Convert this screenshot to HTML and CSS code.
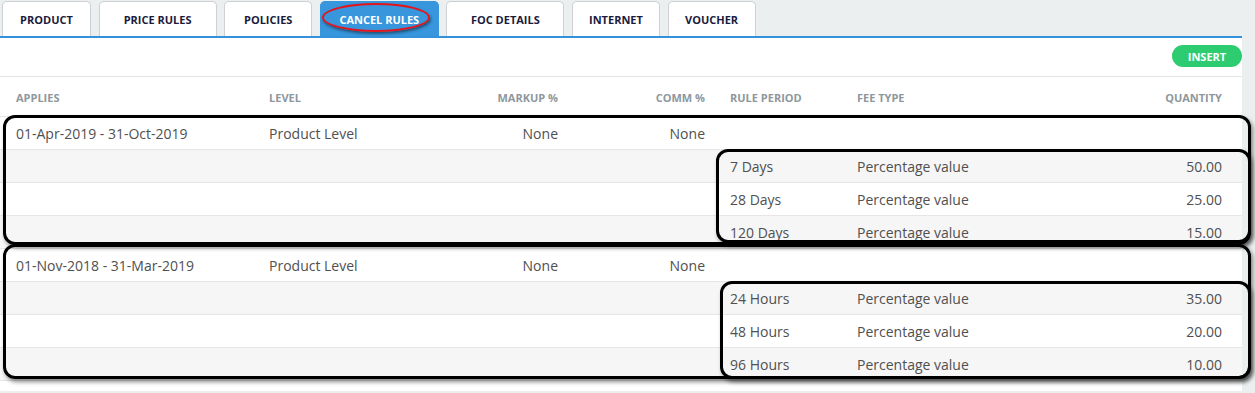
FILE: index.html
```html
<!DOCTYPE html>
<html>
<head>
<meta charset="utf-8">
<link rel="stylesheet" href="styles.css">
</head>
<body>
<div class="page">
  <nav class="tabs">
    <div class="tab t89">PRODUCT</div>
    <div class="tab t118">PRICE RULES</div>
    <div class="tab t88">POLICIES</div>
    <div class="tab t119 active">CANCEL RULES<span class="ring"></span></div>
    <div class="tab t118">FOC DETAILS</div>
    <div class="tab t88">INTERNET</div>
    <div class="tab t88">VOUCHER</div>
  </nav>
  <section class="panel">
    <div class="toolbar"><button class="insert">INSERT</button></div>
    <div class="table">
      <div class="row head">
        <div>APPLIES</div><div>LEVEL</div><div class="r">MARKUP %</div><div class="r">COMM %</div><div class="p">RULE PERIOD</div><div>FEE TYPE</div><div class="r">QUANTITY</div>
      </div>
      <div class="row">
        <div>01-Apr-2019 - 31-Oct-2019</div><div>Product Level</div><div class="r">None</div><div class="r">None</div><div class="p"></div><div></div><div class="r"></div>
      </div>
      <div class="row">
        <div></div><div></div><div class="r"></div><div class="r"></div><div class="p">7 Days</div><div>Percentage value</div><div class="r">50.00</div>
      </div>
      <div class="row">
        <div></div><div></div><div class="r"></div><div class="r"></div><div class="p">28 Days</div><div>Percentage value</div><div class="r">25.00</div>
      </div>
      <div class="row">
        <div></div><div></div><div class="r"></div><div class="r"></div><div class="p">120 Days</div><div>Percentage value</div><div class="r">15.00</div>
      </div>
      <div class="row">
        <div>01-Nov-2018 - 31-Mar-2019</div><div>Product Level</div><div class="r">None</div><div class="r">None</div><div class="p"></div><div></div><div class="r"></div>
      </div>
      <div class="row">
        <div></div><div></div><div class="r"></div><div class="r"></div><div class="p">24 Hours</div><div>Percentage value</div><div class="r">35.00</div>
      </div>
      <div class="row">
        <div></div><div></div><div class="r"></div><div class="r"></div><div class="p">48 Hours</div><div>Percentage value</div><div class="r">20.00</div>
      </div>
      <div class="row">
        <div></div><div></div><div class="r"></div><div class="r"></div><div class="p">96 Hours</div><div>Percentage value</div><div class="r">10.00</div>
      </div>
    </div>
  </section>
  <div class="mark m1"></div>
  <div class="mark m2"></div>
  <div class="mark m3"></div>
  <div class="mark m4"></div>
</div>
</body>
</html>
```
FILE: styles.css
```css
html, body {
  margin: 0;
  padding: 0;
  background: #ebeff0;
}
body {
  font-family: "Open Sans", "Noto Sans", sans-serif;
  width: 1255px;
  height: 393px;
  overflow: hidden;
}
.page {
  position: relative;
  width: 1255px;
  height: 393px;
}
.tabs {
  display: flex;
  gap: 7.6px;
  padding: 1px 0 0 2px;
  height: 35px;
}
.tab {
  position: relative;
  box-sizing: border-box;
  height: 35px;
  background: #fff;
  border: 1px solid #cdd1d4;
  border-bottom: none;
  border-radius: 5px 5px 0 0;
  display: flex;
  align-items: center;
  justify-content: center;
  font-size: 11px;
  font-weight: 700;
  color: #1b1b3d;
}
.t88 { width: 88px; }
.t89 { width: 89px; }
.t118 { width: 118px; }
.t119 { width: 119px; }
.tab.active {
  background: #3796dc;
  border-color: #3796dc;
  color: #fff;
}
.ring {
  position: absolute;
  left: 1px;
  top: 1px;
  width: 108px;
  height: 29px;
  box-sizing: border-box;
  border: 2.5px solid #e3151c;
  border-radius: 50%;
  box-shadow: 1px 2px 3px rgba(0, 0, 0, 0.45);
}
.panel {
  width: 1242px;
  background: #fff;
  border-top: 2px solid #3592da;
  padding-bottom: 10px;
}
.toolbar {
  height: 38px;
  border-bottom: 1px solid #e4e4e4;
  display: flex;
  justify-content: flex-end;
  align-items: flex-start;
}
.insert {
  margin-top: 7px;
  height: 22px;
  width: 70px;
  border: none;
  border-radius: 11px;
  background: #2ecc71;
  color: #fff;
  font-family: "Open Sans", sans-serif;
  font-size: 11px;
  font-weight: 700;
  padding: 0;
}
.row {
  display: grid;
  grid-template-columns: 253px 151px 138px 147px 152px 143px 222px;
  padding: 0 20px 0 16px;
  height: 32px;
  align-items: center;
  border-bottom: 1px solid #e6e6e6;
  font-size: 14px;
  color: #505050;
}
.row:nth-child(odd) {
  background: #f6f6f6;
}
.row.head {
  height: 38px;
  background: #fff;
  font-size: 11px;
  font-weight: 700;
  color: #8e979c;
  padding-top: 1px;
}
.r { text-align: right; }
.p { padding-left: 25px; }
.mark {
  position: absolute;
  box-sizing: border-box;
  border: 3px solid #000;
  border-radius: 12px;
  box-shadow: 2px 3px 4px rgba(0, 0, 0, 0.45);
}
.m1 { left: 3px; top: 115px; width: 1248px; height: 130px; }
.m2 { left: 716px; top: 149px; width: 535px; height: 94px; }
.m3 { left: 3px; top: 244px; width: 1248px; height: 135px; }
.m4 { left: 720px; top: 281px; width: 531px; height: 98px; }
```
